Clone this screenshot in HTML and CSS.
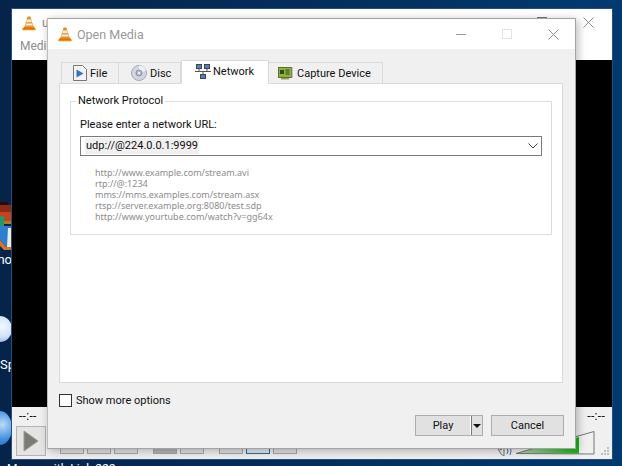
FILE: index.html
```html
<!DOCTYPE html>
<html lang="en">
<head>
  <meta charset="UTF-8" />
  <title>Open Media</title>
  <link rel="stylesheet" href="styles.css">
</head>
<body>

<svg width="0" height="0" class="defs">
  <symbol id="cone" viewBox="0 0 16 16">
    <path d="M6.6 1.5h2.8l3 10H3.600z" fill="#f08a12"/>
    <path d="M6 4.400h4l.8 2.800H5.200zM4.900 8.600h6.200l.6 2H4.300z" fill="#f4f0ea"/>
    <path d="M1 14.200l2.500-3h9l2.500 3-.8 1H1.800z" fill="#ef8a10"/>
    <path d="M3 12.500h10l1 1.500H2z" fill="#d97608"/>
  </symbol>
</svg>

<!-- desktop icons behind the windows -->
<div class="desk-icon toolbox">
  <svg width="12" height="50" viewBox="0 0 12 50">
    <rect x="0" y="0" width="8" height="3" fill="#2a0c06"/>
    <rect x="0" y="3" width="12" height="7" fill="#8c2a16"/>
    <rect x="0" y="10" width="12" height="9" fill="#c4431f"/>
    <rect x="0" y="19" width="12" height="3" fill="#b9781c"/>
    <rect x="0" y="14" width="4" height="10" fill="#1e9a6c"/>
    <path d="M0 24h12v21H6L0 38z" fill="#2f7fd0"/>
    <path d="M8 26h4v19H7z" fill="#f0ead8"/>
    <path d="M0 38l6 7h6v3H4l-4-4z" fill="#d8742a"/>
  </svg>
</div>
<div class="desk-label no">no</div>
<div class="desk-icon globe"></div>
<div class="desk-label sp">Sp</div>
<div class="desk-icon earth"></div>
<div class="desk-label bottom">Maxxx with Link 222</div>

<!-- main vlc window -->
<div class="vlc">
  <div class="vlc-title">
    <svg class="cone-big"><use href="#cone"/></svg>
    <span>u</span>
    <span class="vlc-min"></span>
    <span class="vlc-close">
      <svg width="11" height="11" viewBox="0 0 11 11"><path d="M.5.500l10 10M10.500.500l-10 10" stroke="#8f8f8f" fill="none"/></svg>
    </span>
  </div>
  <div class="vlc-menu">Medi</div>
  <div class="vlc-video"></div>
  <div class="vlc-controls">
    <div class="times"><span>--:--</span><span>--:--</span></div>
    <div class="ctl-row">
      <div class="play-big">
        <svg width="16" height="24" viewBox="0 0 16 24"><path d="M1 2l14 10L1 22z" fill="#7b7b74" stroke="#9a9a94"/></svg>
      </div>
      <div class="small-btns">
        <span class="sb"></span><span class="sb"></span><span class="sb gap"></span>
        <span class="sb dark"></span><span class="sb gap"></span>
        <span class="sb"></span><span class="sb blue"></span><span class="sb"></span>
      </div>
      <div class="volume">
        <svg width="16" height="10" viewBox="0 0 16 10"><path d="M1 1l4 3 3-4v10L5 8z" fill="#eee" stroke="#777"/><path d="M11 2q2 3 0 6M14 1q2 4 0 8" stroke="#4a6fb0" fill="none"/></svg>
        <div class="vol-track">
          <svg width="80" height="24" viewBox="0 0 80 24">
            <defs>
              <linearGradient id="vg" x1="0" y1="0" x2="1" y2="0">
                <stop offset="0" stop-color="#b9d8b4"/><stop offset="1" stop-color="#12bb10"/>
              </linearGradient>
            </defs>
            <path d="M1 22.500L64 6v16.500z" fill="url(#vg)"/>
            <path d="M1 22.500L79 .5v22.500z" fill="none" stroke="#777" stroke-linejoin="round"/>
          </svg>
        </div>
        <svg class="grip" width="8" height="8" viewBox="0 0 8 8"><path d="M6 0h2v2H6zM3 3h2v2H3zM6 3h2v2H6zM0 6h2v2H0zM3 6h2v2H3zM6 6h2v2H6z" fill="#bdbdbd"/></svg>
      </div>
    </div>
  </div>
</div>

<!-- open media dialog -->
<div class="dialog">
  <div class="dlg-title">
    <svg class="cone-big"><use href="#cone"/></svg>
    <span class="dlg-name">Open Media</span>
    <div class="winbtns">
      <svg width="10" height="10" viewBox="0 0 10 10"><path d="M0 5.500h10" stroke="#999"/></svg>
      <svg width="10" height="10" viewBox="0 0 10 10"><rect x=".5" y=".5" width="9" height="9" fill="none" stroke="#e3e3e3"/></svg>
      <svg width="11" height="11" viewBox="0 0 11 11"><path d="M.5.500l10 10M10.500.500l-10 10" stroke="#8a8a8a" fill="none"/></svg>
    </div>
  </div>

  <div class="dlg-body">
    <div class="tabs">
      <div class="tab file">
        <svg width="14" height="16" viewBox="0 0 14 16"><path d="M.5.500h9l4 4v11H.5z" fill="#f4f4f4" stroke="#777"/><path d="M3.500 4.500l7 4-7 4z" fill="#2f74c0"/></svg>
        File
      </div>
      <div class="tab disc">
        <svg width="16" height="16" viewBox="0 0 16 16"><circle cx="8" cy="8" r="7.500" fill="#d3d6e2" stroke="#a4a8b8"/><path d="M8 .5a7.500 7.500 0 0 1 7 5L8 8z" fill="#eef0f6"/><circle cx="8" cy="8" r="3" fill="#b9bcc8" stroke="#8c90a0"/><circle cx="8" cy="8" r="1" fill="#fff"/></svg>
        Disc
      </div>
      <div class="tab active">
        <svg width="16" height="15" viewBox="0 0 16 15"><path d="M4 5v3M12 5v3M0 7.500h16M8 8v2" stroke="#555" fill="none"/><rect x="1.500" y=".5" width="5" height="4" fill="#4d82c4" stroke="#444"/><rect x="9.500" y=".5" width="5" height="4" fill="#4d82c4" stroke="#444"/><rect x="5.500" y="10.500" width="5" height="4" fill="#4d82c4" stroke="#444"/></svg>
        Network
      </div>
      <div class="tab capture">
        <svg width="16" height="14" viewBox="0 0 16 14"><rect x=".5" y="1.500" width="13" height="10" fill="#8db33a" stroke="#5a6e30"/><rect x="2" y="4" width="4" height="4" fill="#2f4a1c"/><path d="M7.500 4h4M7.500 6h4M7.500 8h4" stroke="#2f4a1c"/><path d="M14 1V12" stroke="#9a9a9a"/><path d="M3 12h8v1.500H3z" fill="#9a9a60"/></svg>
        Capture Device
      </div>
    </div>

    <div class="panel">
      <fieldset class="group">
        <legend>Network Protocol</legend>
        <label class="url-label">Please enter a network URL:</label>
        <div class="combo">
          <span class="combo-text">udp://@224.0.0.1:9999</span>
          <svg width="10" height="6" viewBox="0 0 10 6"><path d="M.5.500L5 5 9.500.5" stroke="#444" fill="none"/></svg>
        </div>
        <div class="examples">
          <div>http://www.example.com/stream.avi</div>
          <div>rtp://@:1234</div>
          <div>mms://mms.examples.com/stream.asx</div>
          <div>rtsp://server.example.org:8080/test.sdp</div>
          <div>http://www.yourtube.com/watch?v=gg64x</div>
        </div>
      </fieldset>
    </div>

    <div class="more">
      <span class="check"></span>
      Show more options
    </div>

    <div class="actions">
      <div class="btn play">
        <span class="play-label">Play</span>
        <span class="play-arrow"></span>
      </div>
      <div class="btn cancel">Cancel</div>
    </div>
  </div>
</div>

</body>
</html>
```

FILE: styles.css
```css
html, body {
  margin: 0;
  height: 100%;
}
body {
  width: 622px;
  height: 466px;
  overflow: hidden;
  position: relative;
  background: linear-gradient(90deg, #06244a 0%, #032e5c 50%, #013a70 100%);
  font-family: Roboto, sans-serif;
  font-size: 12px;
  color: #111;
}
.defs {
  position: absolute;
}

.desk-icon, .desk-label {
  position: absolute;
}
.toolbox {
  left: 0;
  top: 202px;
  line-height: 0;
}
.globe {
  left: -12px;
  top: 316px;
  width: 24px;
  height: 26px;
  border-radius: 50%;
  background: radial-gradient(circle at 60% 40%, #f2f8ff 0%, #cfe3f8 50%, #5f8fdc 100%);
}
.earth {
  left: -12px;
  top: 411px;
  width: 24px;
  height: 34px;
  border-radius: 50%;
  background: radial-gradient(circle at 60% 40%, #bcdcf8 0%, #3f8fe0 60%, #1d5fb8 100%);
}
.desk-label {
  color: #fff;
  font-size: 13px;
  line-height: 14px;
  width: 12px;
  overflow: hidden;
  left: 0;
  direction: rtl;
}
.no {
  top: 253px;
}
.sp {
  top: 358px;
  direction: ltr;
}
.bottom {
  top: 462px;
  left: 7px;
  width: 110px;
  white-space: nowrap;
  font-size: 12px;
  direction: ltr;
}

/* back window */
.vlc {
  position: absolute;
  left: 12px;
  top: 9px;
  width: 600px;
  height: 450px;
  background: #f0f0f0;
  display: flex;
  flex-direction: column;
  box-shadow: 0 0 0 1px #26507c;
}
.vlc-title {
  height: 27px;
  background: #fff;
  display: flex;
  align-items: center;
  padding-left: 9px;
  gap: 5px;
  color: #888;
}
.cone-big {
  width: 16px;
  height: 16px;
  flex: none;
}
.vlc-min {
  width: 10px;
  height: 1px;
  background: #777;
  margin: -10px 0 0 auto;
}
.vlc-close {
  margin-left: 31px;
  margin-right: 18px;
  line-height: 0;
}
.vlc-menu {
  height: 24px;
  background: #fff;
  padding-left: 8px;
  color: #8d8d8d;
  line-height: 20px;
}
.vlc-video {
  flex: 1;
  background: #000;
}
.vlc-controls {
  height: 52px;
  display: flex;
  flex-direction: column;
}
.times {
  display: flex;
  justify-content: space-between;
  padding: 2px 7px 0;
  height: 17px;
  line-height: 14px;
  letter-spacing: .3px;
}
.ctl-row {
  display: flex;
  padding-left: 4px;
}
.play-big {
  width: 28px;
  height: 28px;
  border: 1px solid #b4b4b4;
  background: #e4e4e4;
  display: flex;
  align-items: center;
  justify-content: center;
}
.small-btns {
  display: flex;
  gap: 3px;
  margin: 22px 0 0 14px;
}
.sb {
  width: 22px;
  height: 5px;
  border: 1px solid #a8a8a8;
  border-top: none;
  background: #e2e2e2;
}
.sb.gap {
  margin-right: 12px;
}
.sb.dark {
  background: #b4b4b4;
}
.sb.blue {
  border-color: #2c6aa0;
  background: #dfe8f0;
}
.volume {
  margin-left: auto;
  display: flex;
  align-items: flex-end;
  gap: 3px;
  padding-right: 3px;
  height: 30px;
}
.vol-track {
  line-height: 0;
  margin-bottom: 1px;
}
.grip {
  margin: 0 0 1px 3px;
}

/* dialog */
.dialog {
  position: absolute;
  left: 47px;
  top: 18px;
  width: 529px;
  height: 431px;
  box-sizing: border-box;
  border: 1px solid #a3a3a3;
  border-left-color: #bdbdbd;
  background: #f0f0f0;
  display: flex;
  flex-direction: column;
  font-size: 11px;
  box-shadow: 2px 2px 9px rgba(0, 0, 0, 0.28);
}
.dlg-title {
  height: 30px;
  flex: none;
  background: #fff;
  display: flex;
  align-items: center;
  padding-left: 9px;
  gap: 4px;
}
.dlg-name {
  color: #999;
  font-size: 12.5px;
}
.winbtns {
  margin-left: auto;
  margin-right: 16px;
  display: flex;
  align-items: center;
  gap: 36px;
}
.dlg-body {
  flex: 1;
  display: flex;
  flex-direction: column;
  padding: 11px 12px 12px 11px;
  min-height: 0;
}

.tabs {
  display: flex;
  align-items: flex-end;
  height: 24px;
  padding-left: 2px;
  flex: none;
  position: relative;
  z-index: 1;
  margin-bottom: -1px;
}
.tab {
  box-sizing: border-box;
  height: 22px;
  display: flex;
  align-items: center;
  gap: 3px;
  border: 1px solid #d9d9d9;
  border-left: none;
  background: #f0f0f0;
}
.tab.file {
  width: 58px;
  padding-left: 11px;
  border-left: 1px solid #d9d9d9;
}
.tab.disc {
  width: 62px;
  padding-left: 12px;
}
.tab.active {
  width: 88px;
  height: 24px;
  gap: 2px;
  padding-left: 13px;
  padding-bottom: 2px;
  background: #fff;
  border-left: 1px solid #d9d9d9;
  border-bottom-color: #fff;
}
.tab.capture {
  width: 114px;
  padding-left: 9px;
}

.panel {
  flex: 1;
  background: #fff;
  border: 1px solid #d9d9d9;
  padding: 10px 10px 0;
}
.group {
  margin: 0;
  padding: 10px 9px 0;
  height: 141px;
  box-sizing: border-box;
  border: 1px solid #dcdcdc;
  min-width: 0;
}
.group legend {
  padding: 0 2px;
  margin-left: -4px;
  line-height: 14px;
}
.url-label {
  display: block;
  line-height: 14px;
  margin-bottom: 4px;
}
.combo {
  box-sizing: border-box;
  height: 20px;
  border: 1px solid #7a7a7a;
  display: flex;
  align-items: center;
  justify-content: space-between;
  padding: 0 3px 0 4px;
}
.combo-text {
  background: #f0f0f0;
  line-height: 16px;
  padding: 0 1px;
}
.examples {
  margin: 11px 0 0 15px;
  font-family: "Noto Sans", sans-serif;
  font-size: 9px;
  line-height: 11px;
  color: #8c8c8c;
}

.more {
  display: flex;
  align-items: center;
  gap: 4px;
  height: 14px;
  margin-top: 10px;
  flex: none;
}
.check {
  width: 11px;
  height: 11px;
  border: 1px solid #333;
  background: #fff;
}
.actions {
  display: flex;
  justify-content: flex-end;
  gap: 8px;
  margin-top: 8px;
  margin-right: -1px;
  flex: none;
}
.btn {
  box-sizing: border-box;
  height: 21px;
  border: 1px solid #adadad;
  background: #e1e1e1;
  display: flex;
  align-items: center;
  justify-content: center;
}
.btn.play {
  width: 68px;
  justify-content: flex-start;
}
.play-label {
  width: 54px;
  text-align: center;
}
.play-arrow {
  flex: 1;
  height: 19px;
  border-left: 1px solid #fff;
  box-shadow: inset 1px 0 0 #777;
  display: flex;
  align-items: center;
  justify-content: center;
}
.play-arrow::after {
  content: "";
  border-style: solid;
  border-width: 4px 4px 0;
  border-color: #111 transparent transparent;
}
.btn.cancel {
  width: 73px;
}
```
